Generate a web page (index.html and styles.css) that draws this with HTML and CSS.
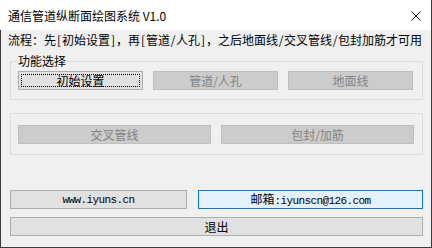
FILE: index.html
```html
<!DOCTYPE html>
<html lang="zh-CN">
<head>
<meta charset="utf-8">
<title>通信管道纵断面绘图系统 V1.0</title>
<link rel="stylesheet" href="styles.css">
</head>
<body>
<div class="window">
  <div class="titlebar">
    <span class="title">通信管道纵断面绘图系统 V1.0</span>
    <svg class="close" width="10" height="10" viewBox="0 0 10 10"><path d="M0.5 0.5 L9.5 9.5 M9.5 0.5 L0.5 9.5" stroke="#111" stroke-width="1" fill="none"/></svg>
  </div>
  <div class="client">
    <p class="flow">流程：先<span class="hw">[</span>初始设置<span class="hw">]</span>，再<span class="hw">[</span>管道<span class="hw">/</span>人孔<span class="hw">]</span>，之后地面线<span class="hw">/</span>交叉管线<span class="hw">/</span>包封加筋才可用</p>
    <fieldset class="group group-main">
      <legend>功能选择</legend>
      <div class="row">
        <button class="btn focus">初始设置</button>
        <button class="btn" disabled>管道/人孔</button>
        <button class="btn" disabled>地面线</button>
      </div>
    </fieldset>
    <fieldset class="group group-second">
      <div class="row">
        <button class="btn" disabled>交叉管线</button>
        <button class="btn" disabled>包封/加筋</button>
      </div>
    </fieldset>
    <div class="links">
      <button class="btn mono site">www.iyuns.cn</button>
      <button class="btn mono mail hot"><span class="cjk">邮箱</span>:iyunscn@126.com</button>
    </div>
    <button class="btn exit">退出</button>
  </div>
</div>
</body>
</html>
```
FILE: styles.css
```css
* { box-sizing: border-box; }
html, body { margin: 0; padding: 0; }
body {
  width: 432px;
  height: 248px;
  overflow: hidden;
  font-family: "Noto Sans CJK SC", "Microsoft YaHei", sans-serif;
  font-size: 12px;
  color: #000;
  background: #fff;
}
.window {
  width: 432px;
  height: 248px;
  display: flex;
  flex-direction: column;
  border-right: 1px solid #3a3a3a;
}
.titlebar {
  height: 30px;
  flex: none;
  display: flex;
  align-items: center;
  justify-content: space-between;
  padding: 1px 10px 0 8px;
  background: #fff;
}
.title {
  font-size: 12px;
  line-height: 16px;
}
.close { display: block; margin-top: 1px; }
.client {
  flex: 1;
  background: #f0f0f0;
  border-left: 1px solid #3a3a3a;
  border-bottom: 1px solid #3a3a3a;
  display: flex;
  flex-direction: column;
  padding: 2px 8px 0 9px;
}
.flow {
  margin: 0 0 0 -2px;
  line-height: 16px;
  height: 16px;
  white-space: nowrap;
  font-size: 12px;
}
.flow .hw {
  display: inline-block;
  width: 6px;
  text-align: center;
}
.group {
  margin: 0;
  border: 1px solid #dcdcdc;
  min-width: 0;
}
.group legend {
  padding: 0 1px;
  margin-left: -1px;
  line-height: 14px;
  height: 14px;
  font-size: 12px;
}
.group-main {
  margin-top: 6px;
  padding: 3px 9px 9px 7px;
}
.group-second {
  margin-top: 13px;
  padding: 11px 8px 10px 7px;
}
.row {
  display: flex;
  gap: 10px;
}
.row .btn { flex: 1; }
.btn {
  position: relative;
  height: 19px;
  margin: 0;
  padding: 0;
  border: 1px solid #adadad;
  background: #e1e1e1;
  color: #000;
  font-family: "Noto Sans CJK SC", "Microsoft YaHei", sans-serif;
  font-size: 12px;
  line-height: 16px;
  border-radius: 0;
  outline: none;
}
.btn:disabled {
  background: #cccccc;
  border-color: #bfbfbf;
  color: #838383;
}
.btn.focus::after {
  content: "";
  position: absolute;
  inset: 2px;
  border: 1px dotted #000;
}
.links {
  margin-top: 35px;
  display: flex;
  gap: 11px;
}
.site { width: 177px; flex: none; }
.mail { flex: 1; }
.mono {
  font-family: "Liberation Mono", "Noto Sans CJK SC", monospace;
  font-size: 11px;
  letter-spacing: -0.6px;
}
.mono .cjk {
  font-family: "Noto Sans CJK SC", sans-serif;
  font-size: 12px;
  letter-spacing: 0;
}
.hot {
  background: #e5f1fb;
  border-color: #0078d7;
}
.exit {
  margin-top: 8px;
  width: 100%;
}
```
